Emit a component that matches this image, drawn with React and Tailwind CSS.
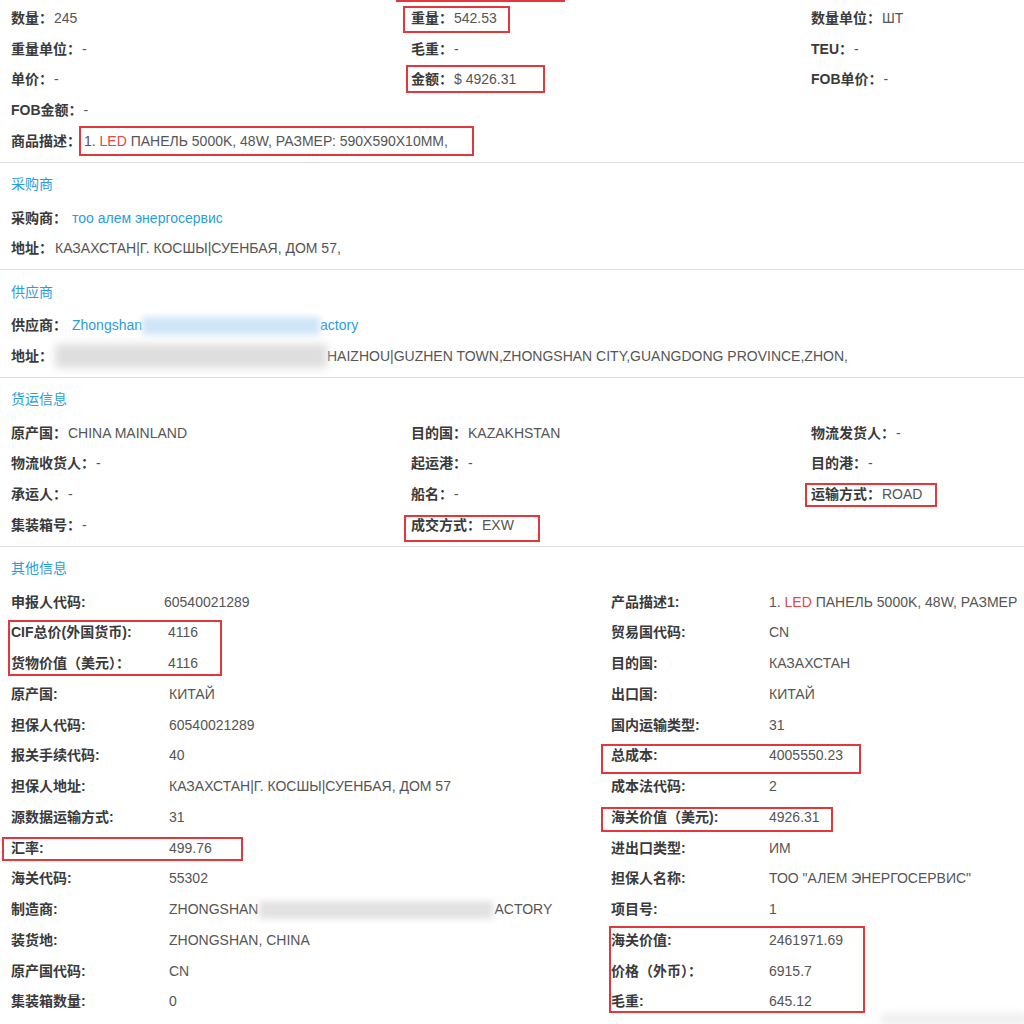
import React from "react";

const Row = ({ children, className = "" }) => (
  <div className={"h-[30.75px] flex items-center whitespace-nowrap " + className}>{children}</div>
);

const KV = ({ label, value, gap = "ml-[1px]" }) => (
  <Row>
    <span className="font-bold text-[#3a3a3a]">{label}</span>
    <span className={gap + " text-[#555]"}>{value}</span>
  </Row>
);

const Header = ({ children }) => (
  <div className="h-[36px] flex items-center text-[#2a9ddc]">{children}</div>
);

const Section = ({ children, first }) => (
  <div className={(first ? "pt-[3px] " : "pt-[4px] ") + "pb-[5px] pl-[11px] border-b border-[#dcdcdc]"}>{children}</div>
);

const Led = () => <span className="text-[#e4473f]">LED</span>;

const Pair = ({ label, value, labelW = "w-[158px]" }) => (
  <Row>
    <span className={labelW + " shrink-0 font-bold text-[#3a3a3a]"}>{label}</span>
    <span className="text-[#555]">{value}</span>
  </Row>
);

const RedBox = ({ c }) => <div className={"absolute border-2 border-[#e4363b] " + c} />;

export default function App() {
  const left = [
    ["申报人代码:", "60540021289", "w-[153px]"],
    ["CIF总价(外国货币):", "4116", "w-[157px]"],
    ["货物价值（美元）：", "4116", "w-[157px]"],
    ["原产国:", "КИТАЙ"],
    ["担保人代码:", "60540021289"],
    ["报关手续代码:", "40"],
    ["担保人地址:", "КАЗАХСТАН|Г. КОСШЫ|СУЕНБАЯ, ДОМ 57"],
    ["源数据运输方式:", "31"],
    ["汇率:", "499.76"],
    ["海关代码:", "55302"],
    [
      "制造商:",
      <span className="inline-flex items-center">
        ZHONGSHAN
        <span className="inline-block w-[234px] h-[18px] mx-[1px] bg-[#e2e2e2] blur-[3px]" />
        ACTORY
      </span>,
    ],
    ["装货地:", "ZHONGSHAN, CHINA"],
    ["原产国代码:", "CN"],
    ["集装箱数量:", "0"],
  ];
  const right = [
    ["产品描述1:", <span>1. <Led /> ПАНЕЛЬ 5000K, 48W, РАЗМЕР</span>],
    ["贸易国代码:", "CN"],
    ["目的国:", "КАЗАХСТАН"],
    ["出口国:", "КИТАЙ"],
    ["国内运输类型:", "31"],
    ["总成本:", "4005550.23"],
    ["成本法代码:", "2"],
    ["海关价值（美元):", "4926.31"],
    ["进出口类型:", "ИМ"],
    ["担保人名称:", 'ТОО "АЛЕМ ЭНЕРГОСЕРВИС"'],
    ["项目号:", "1"],
    ["海关价值:", "2461971.69"],
    ["价格（外币）：", "6915.7"],
    ["毛重:", "645.12"],
  ];

  return (
    <div className="relative w-[1024px] h-[1024px] overflow-hidden bg-white text-[14px] text-[#555] font-['Liberation_Sans','Noto_Sans_CJK_SC',sans-serif]">
      <Section first>
        <div className="grid grid-cols-[400px_400px_1fr]">
          <KV label="数量：" value="245" />
          <KV label="重量：" value="542.53" />
          <KV label="数量单位：" value="ШТ" />
          <KV label="重量单位：" value="-" />
          <KV label="毛重：" value="-" />
          <KV label="TEU：" value="-" />
          <KV label="单价：" value="-" />
          <KV label="金额：" value="$ 4926.31" />
          <KV label="FOB单价：" value="-" />
          <KV label="FOB金额：" value="-" />
          <div />
          <div />
          <div className="col-span-3">
            <KV
              label="商品描述："
              gap="ml-[3px]"
              value={<span>1. <Led /> ПАНЕЛЬ 5000K, 48W, РАЗМЕР: 590X590X10MM,</span>}
            />
          </div>
        </div>
      </Section>

      <Section>
        <Header>采购商</Header>
        <KV label="采购商：" gap="ml-[5px]" value={<span className="text-[#2a9ddc]">тоо алем энергосервис</span>} />
        <KV label="地址：" gap="ml-[2px]" value="КАЗАХСТАН|Г. КОСШЫ|СУЕНБАЯ, ДОМ 57," />
      </Section>

      <Section>
        <Header>供应商</Header>
        <KV
          label="供应商："
          gap="ml-[5px]"
          value={
            <span className="inline-flex items-center text-[#2a9ddc]">
              Zhongshan
              <span className="inline-block w-[178px] h-[18px] bg-[#cfe6f7] blur-[3px]" />
              actory
            </span>
          }
        />
        <Row>
          <span className="font-bold text-[#3a3a3a]">地址：</span>
          <span className="inline-block ml-[2px] w-[272px] h-[24px] bg-[#dedede] blur-[4px]" />
          <span className="text-[#555]">HAIZHOU|GUZHEN TOWN,ZHONGSHAN CITY,GUANGDONG PROVINCE,ZHON,</span>
        </Row>
      </Section>

      <Section>
        <Header>货运信息</Header>
        <div className="grid grid-cols-[400px_400px_1fr]">
          <KV label="原产国：" value="CHINA MAINLAND" />
          <KV label="目的国：" value="KAZAKHSTAN" />
          <KV label="物流发货人：" value="-" />
          <KV label="物流收货人：" value="-" />
          <KV label="起运港：" value="-" />
          <KV label="目的港：" value="-" />
          <KV label="承运人：" value="-" />
          <KV label="船名：" value="-" />
          <KV label="运输方式：" value="ROAD" />
          <KV label="集装箱号：" value="-" />
          <KV label="成交方式：" value="EXW" />
          <div />
        </div>
      </Section>

      <div className="pt-[4px] pl-[11px]">
        <Header>其他信息</Header>
        <div className="grid grid-cols-[600px_1fr]">
          <div>
            {left.map(([l, v, w], i) => (
              <Pair key={i} label={l} value={v} labelW={w || "w-[158px]"} />
            ))}
          </div>
          <div>
            {right.map(([l, v], i) => (
              <Pair key={i} label={l} value={v} />
            ))}
          </div>
        </div>
      </div>

      <RedBox c="left-[396px] top-[-10px] w-[169px] h-[12px]" />
      <RedBox c="left-[403px] top-[6px] w-[107px] h-[27px]" />
      <RedBox c="left-[406px] top-[65px] w-[139px] h-[28px]" />
      <RedBox c="left-[79px] top-[126px] w-[395px] h-[30px]" />
      <RedBox c="left-[805px] top-[483px] w-[132px] h-[24px]" />
      <RedBox c="left-[404px] top-[515px] w-[136px] h-[27px]" />
      <RedBox c="left-[8px] top-[620px] w-[214px] h-[56px]" />
      <RedBox c="left-[2px] top-[837px] w-[241px] h-[24px]" />
      <RedBox c="left-[601px] top-[744px] w-[260px] h-[30px]" />
      <RedBox c="left-[601px] top-[807px] w-[232px] h-[25px]" />
      <RedBox c="left-[609px] top-[926px] w-[256px] h-[87px]" />
      <div className="absolute left-[880px] top-[1014px] w-[150px] h-[10px] bg-[#ececec] blur-[4px] rounded-full" />
    </div>
  );
}
